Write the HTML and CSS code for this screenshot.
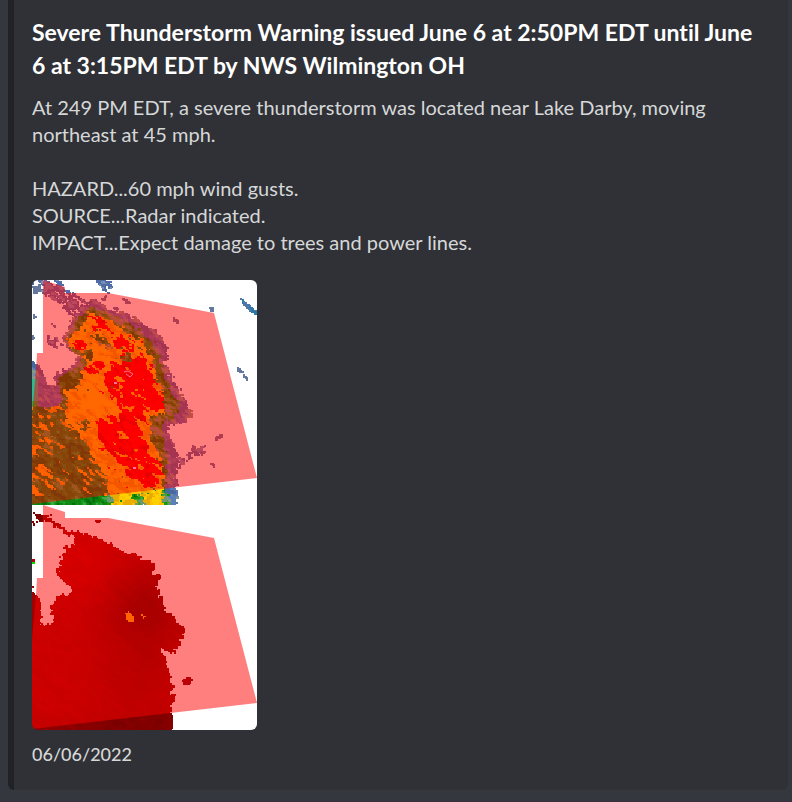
FILE: index.html
```html
<!DOCTYPE html>
<html lang="en">
<head>
<meta charset="utf-8">
<meta name="viewport" content="width=device-width, initial-scale=1">
<title>Severe Thunderstorm Warning</title>
<link rel="stylesheet" href="styles.css">
</head>
<body>
<main class="message">
  <article class="embed">
    <h1 class="embed-title">Severe Thunderstorm Warning issued June 6 at 2:50PM EDT until June 6 at 3:15PM EDT by NWS Wilmington OH</h1>
    <div class="embed-body">
      <p>At 249 PM EDT, a severe thunderstorm was located near Lake Darby, moving northeast at 45 mph.</p>
      <p>HAZARD...60 mph wind gusts.<br>SOURCE...Radar indicated.<br>IMPACT...Expect damage to trees and power lines.</p>
    </div>
    <canvas class="radar" id="radar" width="225" height="450" role="img" aria-label="Radar reflectivity and velocity"></canvas>
    <footer class="embed-footer"><time datetime="2022-06-06">06/06/2022</time></footer>
  </article>
</main>
<script src="radar.js"></script>
</body>
</html>
```
FILE: styles.css
```css
* {
  box-sizing: border-box;
}

body {
  margin: 0;
  background: #34373e;
  color: #d6d7d8;
  font-family: Lato, "Open Sans", sans-serif;
  font-variant-ligatures: none;
}

.message {
  padding: 0 4px 11px 8px;
  border-bottom: 1px solid #3c3040;
}

.embed {
  padding: 16px 24px 24px 18px;
  border-left: 6px solid #202225;
  border-radius: 0 0 6px 6px;
  background: #2f3136;
}

.embed-title {
  margin: 0;
  color: #fff;
  font-size: 23px;
  font-weight: 700;
  line-height: 33px;
}

.embed-body {
  margin-top: 12px;
  font-size: 20px;
  line-height: 27px;
}

.embed-body p {
  margin: 0 0 27px;
}

.embed-body p:last-child {
  margin-bottom: 24px;
}

.radar {
  display: block;
  border-radius: 6px;
}

.embed-footer {
  margin-top: 12px;
  font-size: 18px;
  font-weight: 500;
  line-height: 24px;
}
```
FILE: radar.js
```js
const canvas = document.getElementById("radar");
const ctx = canvas.getContext("2d");
const SIZE = 225;

function hash(x, y, seed) {
  let h = Math.imul(x, 374761393) ^ Math.imul(y, 668265263) ^ Math.imul(seed, 974634777);
  h = Math.imul(h ^ (h >>> 13), 1274126177);
  return ((h ^ (h >>> 16)) >>> 0) / 4294967295;
}

function noise(x, y, seed) {
  const xi = Math.floor(x), yi = Math.floor(y);
  const u = x - xi, v = y - yi;
  const top = hash(xi, yi, seed) * (1 - u) + hash(xi + 1, yi, seed) * u;
  const low = hash(xi, yi + 1, seed) * (1 - u) + hash(xi + 1, yi + 1, seed) * u;
  return top * (1 - v) + low * v;
}

// Noise stretched along the radar beams, which run down to the right.
function streak(x, y, seed, length, width) {
  return noise((x * 0.82 + y * 0.57) / length, (y * 0.82 - x * 0.57) / width, seed) - 0.5;
}

function inside(points, x, y) {
  let hit = false;
  for (let i = 0, j = points.length - 2; i < points.length; j = i, i += 2) {
    const xi = points[i], yi = points[i + 1], xj = points[j], yj = points[j + 1];
    if ((yi > y) !== (yj > y) && x < (xj - xi) * (y - yi) / (yj - yi) + xi) hit = !hit;
  }
  return hit;
}

const anyInside = (list, x, y) => list.some((points) => inside(points, x, y));

const fringe = [
  [59,18, 75,27, 96,33, 116,46, 125,51, 133,66, 136,78, 130,81, 140,99, 150,113, 159,133, 151,143, 136,145, 138,160, 146,173, 143,188, 143,207, 144,226, -9,226, -9,78, 0,80, 8,88, 16,106, 21,106, 23,93, 39,86, 46,76, 33,66, 31,58, 39,39]
];
const bands = [
  [-5,-5, 20,-5, 33,9, 48,17, 62,20, 52,33, 40,36, 28,22, 12,14],
  [12,54, 22,58, 29,65, 24,69, 14,62],
  [62,-4, 74,-4, 79,7, 76,13, 68,8],
  [143,182, 160,170, 174,162, 174,168, 160,175, 144,189]
];
const solids = [
  [69,18, 75,13, 72,21], [89,17, 97,20, 99,24, 93,23],
  [140,37, 147,40, 145,43, 141,41], [176,26, 181,27, 181,31, 178,30],
  [204,85, 208,88, 211,93, 206,92], [211,94, 216,97, 216,101, 212,98],
  [207,16, 215,23, 225,31, 225,35, 218,31, 211,25],
  [160,164, 163,166, 162,171, 158,170], [166,170, 175,170, 170,175],
  [182,157, 189,153, 190,157, 183,160], [177,181, 183,184, 182,187, 178,184],
  [0,6, 8,4, 9,10, 2,14], [19,43, 24,45, 22,48], [0,33, 4,36, 1,39],
  [0,54, 3,57, 0,59]
];
const green = [
  [61,26, 81,34, 106,49, 121,63, 126,79, 133,99, 141,114, 148,127, 141,138, 128,142, 131,160, 135,180, 133,207, 138,226, -9,226, -9,125, 26,127, 31,113, 28,109, 26,96, 39,91, 51,79, 39,71, 33,59, 46,36]
];
const yellow = [
  [56,33, 74,36, 93,49, 108,59, 118,76, 125,99, 131,113, 133,123, 130,133, 118,138, 119,160, 128,177, 131,197, 131,226, 74,226, 74,200, 68,187, 59,177, 53,160, 33,140, 33,110, 49,106, 46,93, 56,83, 49,73, 36,66, 36,58, 51,43]
];
const gaps = [
  [60,53, 67,54, 78,62, 76,68, 66,63], [52,73, 60,68, 63,76, 57,79],
  [43,139, 54,139, 59,149, 50,148], [89,76, 101,80, 99,83, 91,80],
  [29,99, 47,91, 49,98, 39,108, 29,107], [98,214, 108,214, 113,226, 104,226],
  [72,211, 78,211, 82,222, 74,226]
];
const red = [
  [54,36, 65,35, 79,46, 76,51, 63,46], [38,62, 47,61, 54,66, 47,72, 40,68],
  [80,55, 91,56, 99,64, 95,74, 84,67], [52,83, 61,81, 66,91, 57,94],
  [86,79, 106,75, 117,90, 122,105, 130,117, 130,130, 118,131, 108,128, 107,150, 116,168, 125,186, 127,207, 112,205, 97,193, 82,180, 70,165, 62,148, 64,137, 79,143, 86,126, 80,112, 70,101, 75,91],
  [105,71, 111,75, 113,88, 107,84]
];
const warning = [11,0, 33,7, 33,13, 76,13, 182,33, 225,198, 0,224, 0,135, 4,90, 5,73, 11,73];

function reflectivity(x, y) {
  const jx = streak(x, y, 1, 4, 2) * 7;
  const jy = streak(x, y, 2, 4, 2) * 6;
  const sx = x + jx, sy = y + jy;
  const grain = streak(x, y, 5, 4, 2);
  const patch = streak(x, y, 6, 9, 5);
  if (anyInside(solids, x, y)) {
    return x > 208 && y < 34 ? (grain > 0 ? "#2878a8" : "#4e78a8") : "#64789f";
  }
  if (x > 138 && y > 215 && x < 144) return "#5c80b8";
  if (inside(green[0], sx, sy)) {
    if (inside(yellow[0], x + jx * 1.2, y + jy * 1.2) && !anyInside(gaps, sx, sy)) {
      const rx = x + streak(x, y, 12, 8, 3) * 17;
      const ry = y + streak(x, y, 13, 8, 3) * 12;
      if (anyInside(red, rx, ry) && streak(x, y, 8, 7, 3) < 0.3) {
        return grain + patch > 0.25 ? "#d40000" : grain > 0.12 ? "#f00000" : "#ff0000";
      }
      if (streak(x, y, 9, 7, 2) > 0.36 && x > 66 && y < 212) return "#f80000";
      if (streak(x, y, 10, 6, 2) > 0.4) return "#108c18";
      return grain + patch > 0.2 ? "#e8ac00" : grain + patch > 0 ? "#ffc000" : "#ffd000";
    }
    if (x < 75 && y > 120) {
      const open = streak(x, y, 11, 7, 2) + (x < 20 || x > 58 ? 0.04 : -0.07) + patch * 0.2;
      if (open > 0.2 && y < 215) return open > 0.28 ? "#ffc000" : "#e4a800";
      const shade = grain + patch;
      return shade > 0.35 ? "#40a840" : shade > 0.12 ? "#109c20" : shade < -0.25 ? "#007010" : "#108810";
    }
    const shade = grain + patch;
    return shade > 0.3 ? "#709870" : shade > 0.1 ? "#40a030" : shade < -0.2 ? "#007000" : "#189010";
  }
  if (anyInside(fringe, sx, sy)) {
    if (x < 6 && y > 120) return "#18b040";
    if (x < 6 && y > 98) return "#30b890";
    const shade = grain + patch;
    return shade > 0.28 ? "#809c88" : shade > 0.12 ? "#7488a8" : shade < -0.15 ? "#4868a0" : "#5c78b0";
  }
  if (anyInside(bands, sx, sy) && grain > -0.16) return grain > 0.15 ? "#7890b8" : "#506ca4";
  return null;
}

const wind = [
  [48,27, 63,32, 79,38, 93,48, 103,49, 114,55, 123,60, 121,67, 127,72, 123,83, 130,95, 133,105, 143,113, 153,124, 148,132, 149,140, 141,147, 128,143, 134,160, 138,173, 142,182, 138,188, 143,192, 138,198, 141,210, 139,226, -5,226, -5,85, 4,88, 9,102, 8,110, 6,120, 21,116, 21,113, 18,102, 26,88, 38,90, 39,80, 29,73, 24,65, 29,55, 28,48, 34,45, 31,38, 39,42, 43,30],
  [0,7, 8,11, 16,8, 17,13, 29,21, 39,26, 49,25, 52,29, 42,31, 29,25, 15,15, 7,16],
  [0,16, 4,17, 3,21, 0,21], [63,13, 68,14, 67,18, 64,16],
  [150,175, 156,171, 160,175, 155,178, 151,179], [0,79, 2,80, 1,84, 0,84]
];
const turning = [[93,108, 96,106, 101,111, 102,116, 98,117, 94,114], [109,109, 113,111, 112,113, 110,112]];

function velocity(x, y) {
  if (inside(turning[0], x, y) || inside(turning[1], x, y)) return "#ffc800";
  if (x < 3 && y > 56 && y < 58) return "#00e000";
  if (x < 3 && y > 53 && y < 57) return "#b00000";
  const jx = (noise(x / 3, y / 3, 21) - 0.5) * 5;
  const jy = (noise(x / 3, y / 3, 22) - 0.5) * 5;
  if (!anyInside(wind, x + jx, y + jy)) return null;
  if (y < 35 && x < 70) return y < 20 ? "#800000" : "#a00000";
  if (x > 149 && y > 165) return "#780010";
  const core = Math.exp(-((x - 114) ** 2 + (y - 100) ** 2) / 1900);
  const low = Math.exp(-((x - 110) ** 2 + (y - 175) ** 2) / 3200);
  const rim = Math.max(0, 1 - Math.hypot(x - 55, y - 60) / 60);
  const value = 154 - core * 68 - low * 28 + rim * 22 - Math.max(0, y - 195) * 0.5
    + streak(x, y, 30, 12, 4) * 16 + streak(x, y, 31, 3, 2) * 10;
  return `rgb(${Math.round(value)}, 0, 0)`;
}

function drawPanel(top, sample) {
  ctx.save();
  ctx.translate(0, top);
  ctx.beginPath();
  ctx.rect(0, 0, SIZE, SIZE);
  ctx.clip();
  ctx.fillStyle = "#fff";
  ctx.fillRect(0, 0, SIZE, SIZE);
  const cell = 1.5;
  for (let y = 0; y < SIZE; y += cell) {
    for (let x = 0; x < SIZE; x += cell) {
      const color = sample(x, y);
      if (color) {
        ctx.fillStyle = color;
        ctx.fillRect(Math.floor(x), Math.floor(y), 2, 2);
      }
    }
  }
  ctx.beginPath();
  for (let i = 0; i < warning.length; i += 2) ctx.lineTo(warning[i], warning[i + 1]);
  ctx.closePath();
  ctx.fillStyle = "rgba(255, 0, 0, 0.5)";
  ctx.fill();
  if (top === 0) {
    ctx.strokeStyle = "#ff70a0";
    ctx.beginPath();
    ctx.moveTo(92, 92);
    ctx.lineTo(96, 91);
    ctx.lineTo(101, 94);
    ctx.lineTo(98, 97);
    ctx.lineTo(94, 94);
    ctx.stroke();
    ctx.fillStyle = "#ff70a0";
    ctx.fillRect(82, 102, 3, 2);
    ctx.fillRect(101, 187, 3, 2);
  }
  ctx.restore();
}

drawPanel(0, reflectivity);
drawPanel(SIZE, velocity);
```
